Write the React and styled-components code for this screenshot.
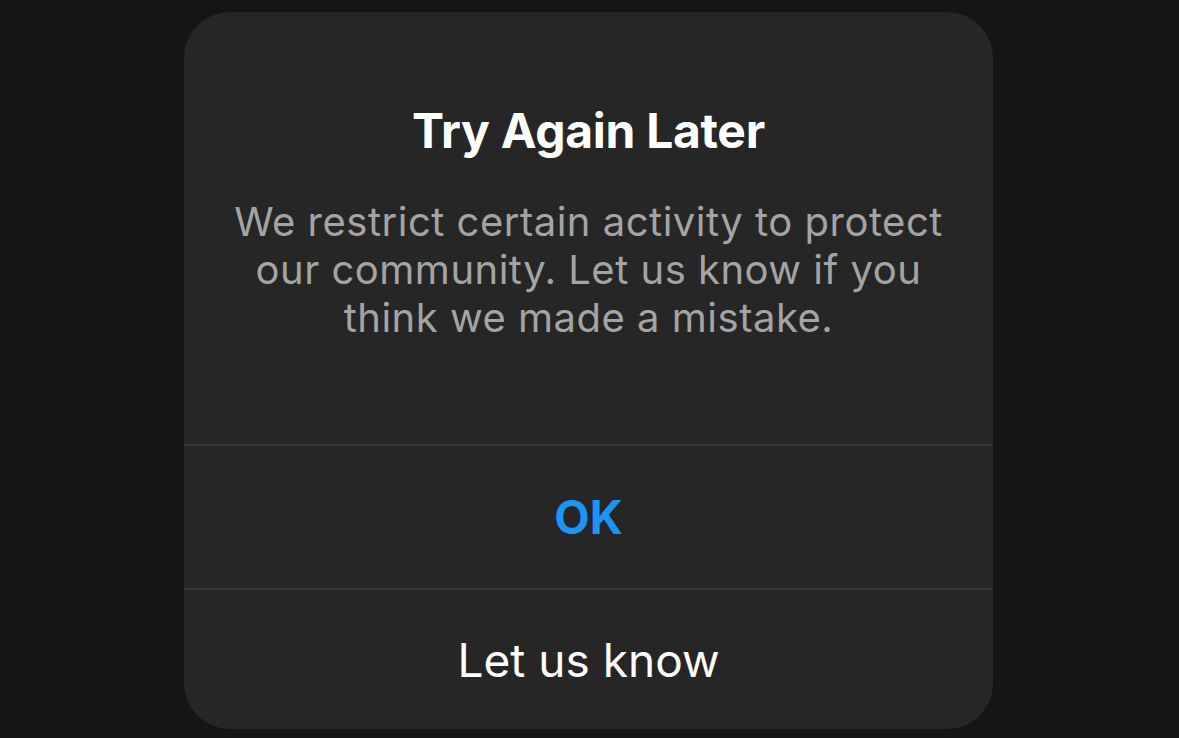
import React from 'react';
import styled, { createGlobalStyle } from 'styled-components';

const GlobalStyle = createGlobalStyle`
    html, body {
        margin: 0;
        padding: 0;
        background: #151515;
    }
    body {
        font-family: Inter, "Noto Sans", "Liberation Sans", sans-serif;
        -webkit-font-smoothing: antialiased;
    }
`;

const Screen = styled.div`
    width: 100%;
    height: 738px;
    display: flex;
    justify-content: center;
    align-items: flex-start;
    overflow: hidden;
`;

const Dialog = styled.div`
    width: 809px;
    margin-top: 12px;
    margin-left: -2px;
    background: #262626;
    border-radius: 46px;
    display: flex;
    flex-direction: column;
    overflow: hidden;
`;

const Body = styled.div`
    padding: 90px 30px 102px;
    display: flex;
    flex-direction: column;
    align-items: center;
    text-align: center;
`;

const Title = styled.h1`
    margin: 0;
    color: #ffffff;
    font-size: 48px;
    line-height: 58px;
    font-weight: 700;
    letter-spacing: -0.3px;
`;

const Message = styled.p`
    margin: 38px 0 0;
    color: #a4a4a4;
    font-size: 40px;
    line-height: 48px;
    font-weight: 400;
    letter-spacing: 0.5px;
`;

const Action = styled.button`
    display: flex;
    align-items: center;
    justify-content: center;
    width: 100%;
    height: ${(p) => p.$height}px;
    margin: 0;
    padding: 0;
    border: none;
    border-top: 2px solid #363636;
    background: transparent;
    font-family: inherit;
    font-size: 46px;
    font-weight: ${(p) => (p.$primary ? 700 : 400)};
    color: ${(p) => (p.$primary ? '#1a95f2' : '#ffffff')};
    cursor: pointer;
`;

const App = () => {
    return (
        <>
            <GlobalStyle />
            <Screen>
                <Dialog>
                    <Body>
                        <Title>Try Again Later</Title>
                        <Message>
                            We restrict certain activity to protect
                            <br />
                            our community. Let us know if you
                            <br />
                            think we made a mistake.
                        </Message>
                    </Body>
                    <Action $primary $height={144}>OK</Action>
                    <Action $height={141}>Let us know</Action>
                </Dialog>
            </Screen>
        </>
    );
};

export default App;
